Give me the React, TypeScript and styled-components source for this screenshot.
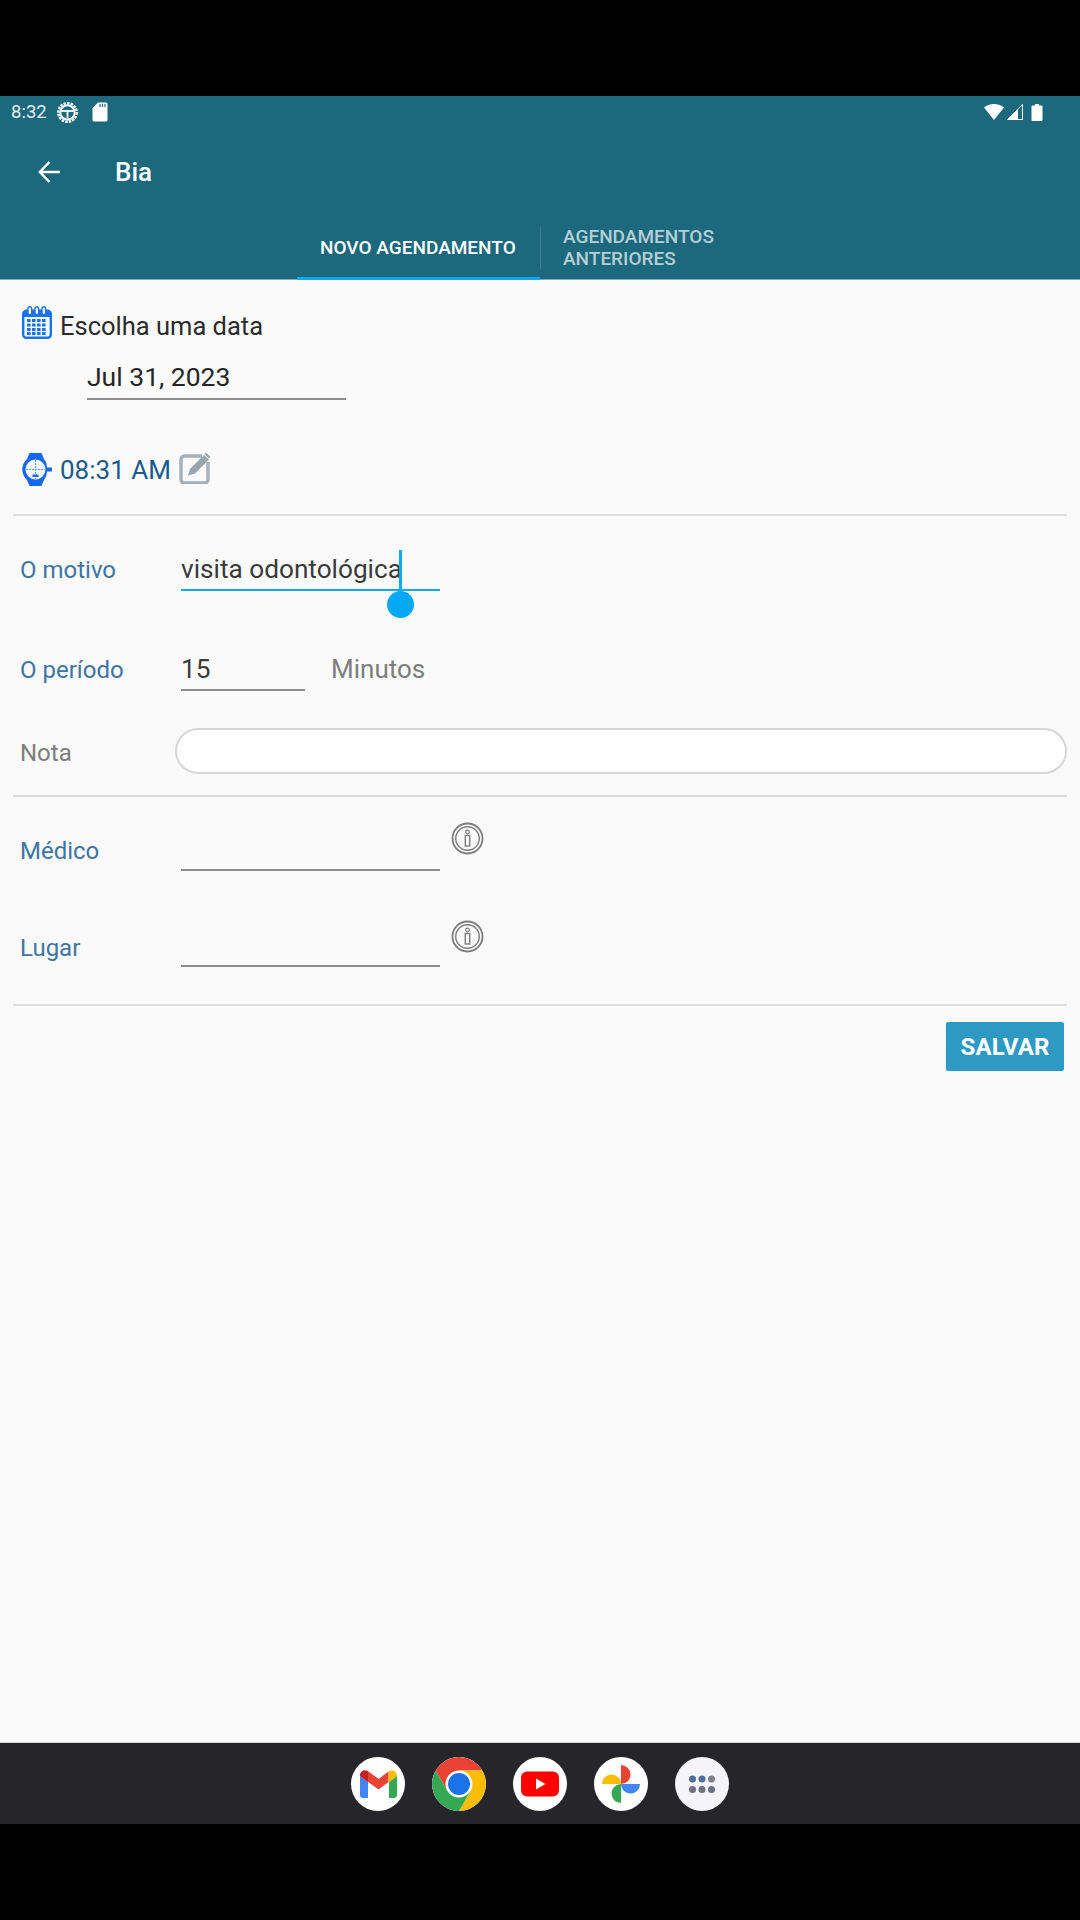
import React from "react";
import styled, { createGlobalStyle } from "styled-components";

const GlobalStyle = createGlobalStyle`
  html, body {
    margin: 0;
    padding: 0;
    background: #000;
  }
  * {
    box-sizing: border-box;
  }
`;

const Screen = styled.div`
  width: 1080px;
  height: 1920px;
  background: #000;
  padding: 96px 0;
  display: flex;
  flex-direction: column;
  font-family: Roboto, "Noto Sans", sans-serif;
  overflow: hidden;
`;

const AppBar = styled.header`
  height: 184px;
  background: #1c687c;
  display: flex;
  flex-direction: column;
  border-bottom: 1px solid #7fa9b6;
`;

const StatusBar = styled.div`
  height: 32px;
  padding: 0 37px 0 11px;
  display: flex;
  align-items: center;
  color: #e8f0f2;
  font-size: 18.5px;
`;

const StatusLeft = styled.div`
  display: flex;
  align-items: center;
  gap: 10px;
`;

const StatusRight = styled.div`
  margin-left: auto;
  display: flex;
  align-items: center;
  gap: 3px;
`;

const TitleRow = styled.div`
  height: 54px;
  margin-top: 17px;
  padding-left: 38px;
  display: flex;
  align-items: center;
  gap: 55px;
  color: #fff;
  font-size: 26px;
  font-weight: 500;
`;

const Tabs = styled.nav`
  margin-top: auto;
  margin-left: 297px;
  height: 53px;
  display: flex;
  align-items: stretch;
  position: relative;
`;

const Tab = styled.div<{ $active?: boolean }>`
  width: ${(p) => (p.$active ? "243px" : "190px")};
  padding-left: 23px;
  padding-bottom: 7px;
  display: flex;
  align-items: center;
  font-size: 19px;
  line-height: 22px;
  font-weight: 500;
  color: ${(p) => (p.$active ? "#fff" : "#b3ced6")};
  border-bottom: 3px solid ${(p) => (p.$active ? "#0fa9f0" : "transparent")};
  margin-bottom: -1px;
`;

const TabDivider = styled.div`
  position: absolute;
  left: 243px;
  top: 0;
  height: 43px;
  width: 1px;
  background: #3b7d90;
`;

const Content = styled.main`
  flex: 1;
  background: #fafafa;
  padding: 0 13px;
  display: flex;
  flex-direction: column;
`;

const IconRow = styled.div<{ $top: number }>`
  margin-top: ${(p) => p.$top}px;
  margin-left: 9px;
  height: 33px;
  display: flex;
  align-items: center;
  gap: 8px;
`;

const HeaderText = styled.span`
  color: #2b2b2b;
  font-size: 25.5px;
  padding-top: 6px;
`;

const TimeText = styled.span`
  color: #1c5a8c;
  font-size: 26px;
`;

const EditSlot = styled.span`
  margin-top: -4px;
  display: flex;
`;

const DateField = styled.div`
  margin-left: 74px;
  width: 259px;
  height: 61px;
  padding-top: 18px;
  border-bottom: 2px solid #8c8c8c;
  font-size: 26.5px;
  line-height: 40px;
  color: #262626;
`;

const Divider = styled.hr<{ $top: number }>`
  margin: ${(p) => p.$top}px 0 0;
  border: none;
  height: 2px;
  background: #dcdcdc;
`;

const FieldRow = styled.div<{ $top: number }>`
  margin-top: ${(p) => p.$top}px;
  margin-left: 7px;
  height: 40px;
  display: flex;
  position: relative;
`;

const Label = styled.label<{ $muted?: boolean; $drop?: number }>`
  width: 161px;
  font-size: 24px;
  line-height: 40px;
  padding-top: ${(p) => p.$drop || 0}px;
  color: ${(p) => (p.$muted ? "#7d7d7d" : "#3f74a3")};
`;

const Line = styled.div<{ $width: number; $focus?: boolean }>`
  width: ${(p) => p.$width}px;
  height: 41px;
  font-size: 26.2px;
  line-height: 38px;
  color: #3a3a3a;
  position: relative;
  border-bottom: 2px solid ${(p) => (p.$focus ? "#0fa9f0" : "#8c8c8c")};
`;

const Caret = styled.span`
  position: absolute;
  left: 218px;
  top: 0;
  width: 3px;
  height: 40px;
  background: #0fa9f0;
`;

const CaretHandle = styled.span`
  position: absolute;
  left: 206px;
  top: 41px;
  width: 27px;
  height: 27px;
  border-radius: 50%;
  background: #03a9f4;
`;

const Unit = styled.span`
  margin-left: 26px;
  font-size: 26px;
  line-height: 38px;
  color: #7d7d7d;
`;

const NoteRow = styled.div`
  margin-top: 38px;
  margin-left: 7px;
  height: 46px;
  display: flex;
  align-items: center;
`;

const NoteInput = styled.div`
  margin-left: -6px;
  flex: 1;
  height: 46px;
  border: 2px solid #d6d6d6;
  border-radius: 23px;
  background: #fff;
`;

const InfoSlot = styled.span<{ $lift: number }>`
  margin-left: 11px;
  margin-top: -${(p) => p.$lift}px;
  display: flex;
  height: 33px;
`;

const Actions = styled.div`
  margin-top: 16px;
  display: flex;
  justify-content: flex-end;
  padding-right: 3px;
`;

const SaveButton = styled.button`
  width: 118px;
  height: 49px;
  border: none;
  border-radius: 2px;
  background: #2e9ac4;
  color: #fff;
  font-family: inherit;
  font-size: 24px;
  font-weight: 700;
  letter-spacing: 0.2px;
`;

const Dock = styled.footer`
  height: 82px;
  background: #25252a;
  border-top: 1px solid #d8d8d8;
  display: flex;
  align-items: center;
  justify-content: center;
  gap: 27px;
`;

const DockIcon = styled.div<{ $tint?: string }>`
  width: 54px;
  height: 54px;
  border-radius: 50%;
  background: ${(p) => p.$tint || "#fff"};
  overflow: hidden;
  display: flex;
`;

const GearIcon = () => (
  <svg width="21" height="21" viewBox="0 0 20 20" fill="none" stroke="#f1f5f6">
    <circle cx="10" cy="10" r="8.8" strokeWidth="2.4" strokeDasharray="2.4 1" />
    <circle cx="10" cy="10" r="6.8" strokeWidth="1.9" />
    <path d="M4 8.6h12M10 8.6V16" strokeWidth="1.8" />
  </svg>
);

const SdIcon = () => (
  <svg width="16" height="20" viewBox="0 0 16 20" style={{ marginLeft: 4 }}>
    <path
      d="M6 0.5h8a1.5 1.5 0 0 1 1.5 1.5v16a1.5 1.5 0 0 1-1.5 1.5H2A1.5 1.5 0 0 1 .5 18V6z"
      fill="#fff"
    />
    <path d="M8 2v3M10.5 2v3M13 2v3" stroke="#1c687c" strokeWidth="1.2" />
  </svg>
);

const WifiIcon = () => (
  <svg width="20" height="16" viewBox="0 0 20 16">
    <path d="M10 16 0 3.6C2.6 1.4 6 0 10 0s7.4 1.4 10 3.6z" fill="#fff" />
  </svg>
);

const SignalIcon = () => (
  <svg width="16" height="16" viewBox="0 0 16 16">
    <path d="M15.500 0.500v15H0.500z" fill="none" stroke="#fff" strokeWidth="1" />
    <path d="M11 5.500V16H0z" fill="#fff" />
  </svg>
);

const BatteryIcon = () => (
  <svg width="12" height="17" viewBox="0 0 12 17" style={{ marginLeft: 5 }}>
    <path
      d="M4 0h4v1.5h2.5a1 1 0 0 1 1 1V16a1 1 0 0 1-1 1h-9a1 1 0 0 1-1-1V2.500a1 1 0 0 1 1-1H4z"
      fill="#fff"
    />
  </svg>
);

const BackIcon = () => (
  <svg width="22" height="22" viewBox="0 0 22 22" fill="none" stroke="#fff" strokeWidth="2.4">
    <path d="M22 11H2M11.500 1 1.800 11l9.700 10" />
  </svg>
);

const CalendarIcon = () => (
  <svg width="30" height="33" viewBox="0 0 30 33">
    <rect x="1.200" y="5" width="27.600" height="26.800" rx="3" fill="#fff" stroke="#1a73e8" strokeWidth="2.400" />
    <path d="M1.500 6.500a3 3 0 0 1 3-3h21a3 3 0 0 1 3 3V11h-27z" fill="#1a73e8" />
    {[6, 13, 20].map((x) => (
      <rect key={x} x={x} y="0.800" width="3.600" height="8" rx="1.800" fill="#fff" stroke="#1a73e8" strokeWidth="1.400" />
    ))}
    {[14, 18.5, 23, 27].map((y) =>
      [5, 10, 15, 20].map((x) => (
        <rect key={`${x}-${y}`} x={x} y={y - 1} width="3.600" height="3" fill="#1a73e8" />
      ))
    )}
  </svg>
);

const WatchIcon = () => (
  <svg width="30" height="33" viewBox="0 0 30 33">
    <path d="M7.500 0h12l2.500 6a13 13 0 0 1 3 8.500h5v4h-5a13 13 0 0 1-3 8.500l-2.500 6h-12L5 27a14 14 0 0 1 0-21z" fill="#1668f0" />
    <circle cx="13.500" cy="16.500" r="10" fill="#f4f8ff" />
    <path d="M13.500 7v19M4 16.500h19" stroke="#5d9bf5" strokeWidth="1.200" strokeDasharray="2 1" />
    <rect x="10.500" y="21.500" width="6" height="2.500" fill="#1668f0" />
  </svg>
);

const EditIcon = () => (
  <svg width="33" height="33" viewBox="0 0 33 33" fill="none">
    <path
      d="M23 5H5.500A3.500 3.500 0 0 0 2 8.500v20A3.500 3.500 0 0 0 5.500 32h20a3.500 3.500 0 0 0 3.500-3.500V11"
      stroke="#a3b0b9"
      strokeWidth="3.400"
    />
    <path d="M11 18 25 4l5 4.500-14 14-7 2z" fill="#98a5ae" />
    <path d="M27 1.500l4.500 4.500-1.500 1.500-4.500-4.500z" fill="#98a5ae" />
  </svg>
);

const InfoIcon = () => (
  <svg width="33" height="33" viewBox="0 0 33 33" fill="none" stroke="#7c7c7c">
    <circle cx="16.500" cy="16.500" r="15" strokeWidth="1.800" />
    <circle cx="16.500" cy="16.500" r="11.800" strokeWidth="1.400" />
    <rect x="14.300" y="13.500" width="4.400" height="10.500" strokeWidth="1.400" />
    <circle cx="16.500" cy="10" r="1.800" strokeWidth="1.200" />
  </svg>
);

const GmailIcon = () => (
  <svg width="54" height="54" viewBox="0 0 54 54">
    <path d="M9 19v19a3 3 0 0 0 3 3h5V25z" fill="#4285f4" />
    <path d="M46 19v19a3 3 0 0 1-3 3h-5V25z" fill="#34a853" />
    <path d="M9 19c0-5 5-7 8.500-4.500L27.500 22l10-7.500v10.500l-10 7.500L9 19z" fill="#ea4335" />
    <path d="M37.500 14.500C41 12 46 14 46 19l-8.500 6.500z" fill="#fbbc04" />
    <path d="M9 19l8 6v-10.500C13.500 12 9 14 9 19z" fill="#c5221f" />
  </svg>
);

const ChromeIcon = () => (
  <svg width="54" height="54" viewBox="0 0 54 54">
    <path d="M3.600 13.500A27 27 0 0 1 50.400 13.500H27L15.300 33.800z" fill="#ea4335" />
    <path d="M50.400 13.500A27 27 0 0 1 27 54L38.700 33.800 27 13.500z" fill="#fbbc04" />
    <path d="M27 54A27 27 0 0 1 3.600 13.500L15.300 33.800H38.700z" fill="#34a853" />
    <circle cx="27" cy="27" r="13.500" fill="#fff" />
    <circle cx="27" cy="27" r="11" fill="#1a73e8" />
  </svg>
);

const YoutubeIcon = () => (
  <svg width="54" height="54" viewBox="0 0 54 54">
    <rect x="8" y="14.500" width="38" height="25" rx="6" fill="#f00" />
    <path d="M23 21.500 32.500 27 23 32.500z" fill="#fff" />
  </svg>
);

const PhotosIcon = () => (
  <svg width="54" height="54" viewBox="0 0 54 54">
    <path d="M27 8a9.500 9.500 0 0 1 0 19z" fill="#ea4335" />
    <path d="M46 27a9.500 9.500 0 0 1-19 0z" fill="#4285f4" />
    <path d="M27 46a9.500 9.500 0 0 1 0-19z" fill="#34a853" />
    <path d="M8 27a9.500 9.500 0 0 1 19 0z" fill="#fbbc04" />
  </svg>
);

const AppsIcon = () => (
  <svg width="54" height="54" viewBox="0 0 54 54">
    {[17.5, 27, 36.5].map((x, i) => (
      <React.Fragment key={x}>
        <circle cx={x} cy="22" r="3.500" fill={i < 2 ? "#4d6f9c" : "#80808c"} />
        <circle cx={x} cy="32.500" r="3.500" fill="#6f7080" />
      </React.Fragment>
    ))}
  </svg>
);

export default function App() {
  return (
    <>
      <GlobalStyle />
      <Screen>
        <AppBar>
          <StatusBar>
            <StatusLeft>
              <span>8:32</span>
              <GearIcon />
              <SdIcon />
            </StatusLeft>
            <StatusRight>
              <WifiIcon />
              <SignalIcon />
              <BatteryIcon />
            </StatusRight>
          </StatusBar>
          <TitleRow>
            <BackIcon />
            <span>Bia</span>
          </TitleRow>
          <Tabs>
            <Tab $active>NOVO AGENDAMENTO</Tab>
            <TabDivider />
            <Tab>
              AGENDAMENTOS
              <br />
              ANTERIORES
            </Tab>
          </Tabs>
        </AppBar>
        <Content>
          <IconRow $top={26}>
            <CalendarIcon />
            <HeaderText>Escolha uma data</HeaderText>
          </IconRow>
          <DateField>Jul 31, 2023</DateField>
          <IconRow $top={53}>
            <WatchIcon />
            <TimeText>08:31 AM</TimeText>
            <EditSlot>
              <EditIcon />
            </EditSlot>
          </IconRow>
          <Divider $top={28} />
          <FieldRow $top={34}>
            <Label>O motivo</Label>
            <Line $width={259} $focus>
              visita odontológica
              <Caret />
              <CaretHandle />
            </Line>
          </FieldRow>
          <FieldRow $top={60}>
            <Label>O período</Label>
            <Line $width={124}>15</Line>
            <Unit>Minutos</Unit>
          </FieldRow>
          <NoteRow>
            <Label $muted $drop={3}>
              Nota
            </Label>
            <NoteInput />
          </NoteRow>
          <Divider $top={21} />
          <FieldRow $top={33}>
            <Label $drop={1}>Médico</Label>
            <Line $width={259} />
            <InfoSlot $lift={8}>
              <InfoIcon />
            </InfoSlot>
          </FieldRow>
          <FieldRow $top={56}>
            <Label $drop={2}>Lugar</Label>
            <Line $width={259} />
            <InfoSlot $lift={6}>
              <InfoIcon />
            </InfoSlot>
          </FieldRow>
          <Divider $top={38} />
          <Actions>
            <SaveButton>SALVAR</SaveButton>
          </Actions>
        </Content>
        <Dock>
          <DockIcon>
            <GmailIcon />
          </DockIcon>
          <DockIcon>
            <ChromeIcon />
          </DockIcon>
          <DockIcon>
            <YoutubeIcon />
          </DockIcon>
          <DockIcon>
            <PhotosIcon />
          </DockIcon>
          <DockIcon $tint="#f4f4fa">
            <AppsIcon />
          </DockIcon>
        </Dock>
      </Screen>
    </>
  );
}
